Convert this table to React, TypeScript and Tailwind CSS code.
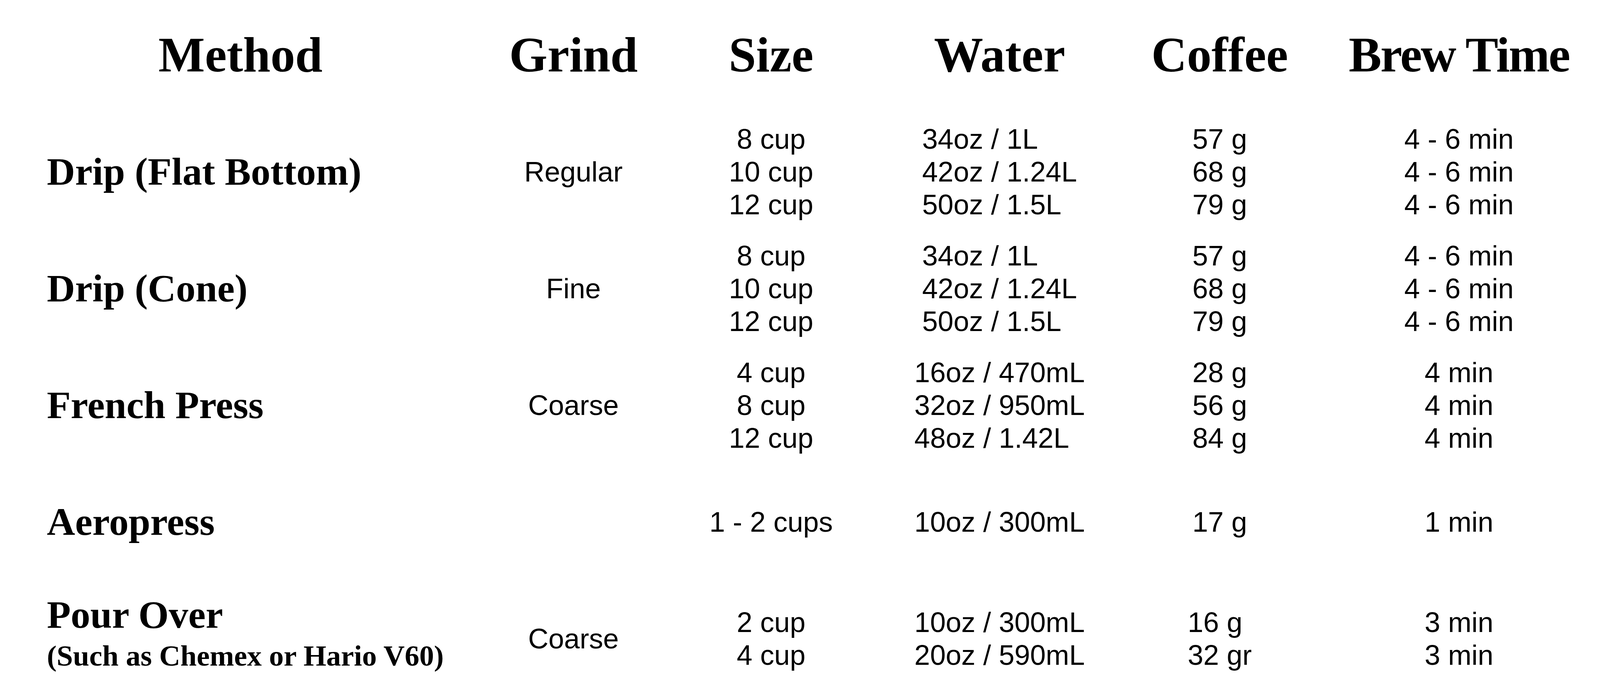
const serif = "font-['Liberation_Serif','Times_New_Roman',serif] font-bold";

type Method = {
  name: string;
  note?: string;
  grind: string;
  sizes: string[];
  water: string[];
  coffee: string[];
  time: string[];
};

const methods: Method[] = [
  {
    name: "Drip (Flat Bottom)",
    grind: "Regular",
    sizes: ["8 cup", "10 cup", "12 cup"],
    water: ["34oz / 1L", "42oz / 1.24L", "50oz / 1.5L"],
    coffee: ["57 g", "68 g", "79 g"],
    time: ["4 - 6 min", "4 - 6 min", "4 - 6 min"],
  },
  {
    name: "Drip (Cone)",
    grind: "Fine",
    sizes: ["8 cup", "10 cup", "12 cup"],
    water: ["34oz / 1L", "42oz / 1.24L", "50oz / 1.5L"],
    coffee: ["57 g", "68 g", "79 g"],
    time: ["4 - 6 min", "4 - 6 min", "4 - 6 min"],
  },
  {
    name: "French Press",
    grind: "Coarse",
    sizes: ["4 cup", "8 cup", "12 cup"],
    water: ["16oz / 470mL", "32oz / 950mL", "48oz / 1.42L"],
    coffee: ["28 g", "56 g", "84 g"],
    time: ["4 min", "4 min", "4 min"],
  },
  {
    name: "Aeropress",
    grind: "",
    sizes: ["1 - 2 cups"],
    water: ["10oz / 300mL"],
    coffee: ["17 g"],
    time: ["1 min"],
  },
  {
    name: "Pour Over",
    note: "(Such as Chemex or Hario V60)",
    grind: "Coarse",
    sizes: ["2 cup", "4 cup"],
    water: ["10oz / 300mL", "20oz / 590mL"],
    coffee: ["16 g", "32 gr"],
    time: ["3 min", "3 min"],
  },
];

const cols = "grid grid-cols-[1215px_506px_506px_664px_463px_786px]";

function Lines({ items, block }: { items: string[]; block?: boolean }) {
  if (block) {
    return (
      <div className="flex justify-center">
        <div className="text-left">
          {items.map((t, i) => (
            <div key={i} className="whitespace-pre">{t}</div>
          ))}
        </div>
      </div>
    );
  }
  return (
    <div className="text-center">
      {items.map((t, i) => (
        <div key={i} className="whitespace-pre">{t}</div>
      ))}
    </div>
  );
}

export default function App() {
  return (
    <div className="w-[4140px] h-[1788px] bg-white text-black overflow-hidden">
      <div className={`${cols} pt-[78px] text-[126px] leading-none ${serif}`}>
        <div className="pl-[16px] text-center">Method</div>
        <div className="text-center">Grind</div>
        <div className="text-center">Size</div>
        <div className="text-center">Water</div>
        <div className="text-center">Coffee</div>
        <div className="pr-[24px] text-center whitespace-nowrap tracking-[-3px]">Brew Time</div>
      </div>

      <div className="mt-[110px] flex flex-col gap-[47px] font-['Liberation_Sans',Arial,sans-serif] text-[72px] leading-[84px]">
        {methods.map((m) => (
          <div key={m.name} className={`${cols} min-h-[252px] items-center`}>
            <div className={`pl-[120px] ${serif} ${m.note ? "mb-[30px]" : ""}`}>
              <div className="text-[100px] leading-none whitespace-nowrap">{m.name}</div>
              {m.note && (
                <div className="mt-[17px] text-[75px] leading-none whitespace-nowrap">{m.note}</div>
              )}
            </div>
            <div className="text-center">{m.grind}</div>
            <Lines items={m.sizes} />
            <Lines items={m.water} block />
            <Lines items={m.coffee} block />
            <div className="pr-[24px]">
              <Lines items={m.time} />
            </div>
          </div>
        ))}
      </div>
    </div>
  );
}
